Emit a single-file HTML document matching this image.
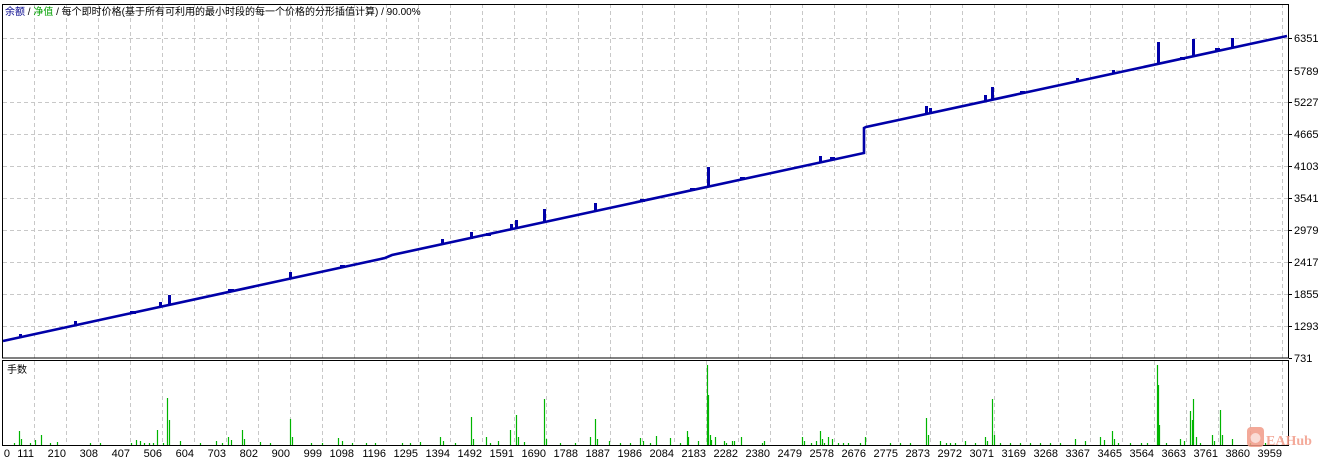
<!DOCTYPE html>
<html><head><meta charset="utf-8"><style>
html,body{margin:0;padding:0;background:#fff;}
svg{display:block;font-family:"Liberation Sans","Noto Sans CJK SC",sans-serif;}
</style></head><body>
<svg width="1318" height="459" viewBox="0 0 1318 459" xmlns="http://www.w3.org/2000/svg">
<rect width="1318" height="459" fill="#fff"/>
<g id="grid" stroke="#c8c8c8" stroke-width="1" stroke-dasharray="4,3">
<path d="M34.5 4V358M66.5 4V358M98.5 4V358M130.5 4V358M162.5 4V358M194.5 4V358M226.5 4V358M258.5 4V358M290.5 4V358M322.5 4V358M354.5 4V358M386.5 4V358M418.5 4V358M450.5 4V358M482.5 4V358M514.5 4V358M546.5 4V358M578.5 4V358M610.5 4V358M642.5 4V358M674.5 4V358M706.5 4V358M738.5 4V358M770.5 4V358M802.5 4V358M834.5 4V358M866.5 4V358M898.5 4V358M930.5 4V358M962.5 4V358M994.5 4V358M1026.5 4V358M1058.5 4V358M1090.5 4V358M1122.5 4V358M1154.5 4V358M1186.5 4V358M1218.5 4V358M1250.5 4V358M1282.5 4V358"/>
<path d="M34.5 361V445M66.5 361V445M98.5 361V445M130.5 361V445M162.5 361V445M194.5 361V445M226.5 361V445M258.5 361V445M290.5 361V445M322.5 361V445M354.5 361V445M386.5 361V445M418.5 361V445M450.5 361V445M482.5 361V445M514.5 361V445M546.5 361V445M578.5 361V445M610.5 361V445M642.5 361V445M674.5 361V445M706.5 361V445M738.5 361V445M770.5 361V445M802.5 361V445M834.5 361V445M866.5 361V445M898.5 361V445M930.5 361V445M962.5 361V445M994.5 361V445M1026.5 361V445M1058.5 361V445M1090.5 361V445M1122.5 361V445M1154.5 361V445M1186.5 361V445M1218.5 361V445M1250.5 361V445M1282.5 361V445"/>
<path d="M3 38.5H1289M3 70.5H1289M3 102.5H1289M3 134.5H1289M3 166.5H1289M3 198.5H1289M3 230.5H1289M3 262.5H1289M3 294.5H1289M3 326.5H1289"/>
</g>
<g fill="none" stroke="#000" stroke-width="1">
<rect x="2.5" y="4.5" width="1286" height="353.5"/>
<rect x="2.5" y="360.5" width="1286" height="85"/>
</g>
<path stroke="#000" d="M1289 38.5h3M1289 70.5h3M1289 102.5h3M1289 134.5h3M1289 166.5h3M1289 198.5h3M1289 230.5h3M1289 262.5h3M1289 294.5h3M1289 326.5h3M1289 358.5h3"/>
<g font-size="11" fill="#000">
<text x="1294" y="42">6351</text><text x="1294" y="75">5789</text><text x="1294" y="106">5227</text><text x="1294" y="138">4665</text><text x="1294" y="170">4103</text><text x="1294" y="202">3541</text><text x="1294" y="234">2979</text><text x="1294" y="266">2417</text><text x="1294" y="298">1855</text><text x="1294" y="330">1293</text><text x="1294" y="362">731</text>
</g>
<g font-size="11" fill="#000" text-anchor="end">
<text x="10" y="457">0</text>
<text x="34" y="457">111</text><text x="66" y="457">210</text><text x="98" y="457">308</text><text x="130" y="457">407</text><text x="162" y="457">506</text><text x="194" y="457">604</text><text x="226" y="457">703</text><text x="258" y="457">802</text><text x="290" y="457">900</text><text x="322" y="457">999</text><text x="354" y="457">1098</text><text x="386" y="457">1196</text><text x="418" y="457">1295</text><text x="450" y="457">1394</text><text x="482" y="457">1492</text><text x="514" y="457">1591</text><text x="546" y="457">1690</text><text x="578" y="457">1788</text><text x="610" y="457">1887</text><text x="642" y="457">1986</text><text x="674" y="457">2084</text><text x="706" y="457">2183</text><text x="738" y="457">2282</text><text x="770" y="457">2380</text><text x="802" y="457">2479</text><text x="834" y="457">2578</text><text x="866" y="457">2676</text><text x="898" y="457">2775</text><text x="930" y="457">2873</text><text x="962" y="457">2972</text><text x="994" y="457">3071</text><text x="1026" y="457">3169</text><text x="1058" y="457">3268</text><text x="1090" y="457">3367</text><text x="1122" y="457">3465</text><text x="1154" y="457">3564</text><text x="1186" y="457">3663</text><text x="1218" y="457">3761</text><text x="1250" y="457">3860</text><text x="1282" y="457">3959</text>
</g>
<text x="5" y="15" font-size="10"><tspan fill="#00008b">余额</tspan><tspan fill="#000"> / </tspan><tspan fill="#00a000">净值</tspan><tspan fill="#000"> / 每个即时价格(基于所有可利用的最小时段的每一个价格的分形插值计算) / 90.00%</tspan></text>
<text x="7" y="373" font-size="10" fill="#000">手数</text>
<path stroke="#00b400" stroke-width="1.2" d="M14.5 445v-2M19.5 445v-14M21.5 445v-6M30.5 445v-2M35.5 445v-5M41.5 445v-10M50.5 445v-2M57.5 445v-3M90.5 445v-2M100.5 445v-2M131.5 445v-2M136.5 445v-5M140.5 445v-4M144.5 445v-2M149.5 445v-2M153.5 445v-2M157.5 445v-15M163.5 445v-2M167.5 445v-47M169.5 445v-25M180.5 445v-4M200.5 445v-2M216.5 445v-4M222.5 445v-2M228.5 445v-8M231.5 445v-5M242.5 445v-15M244.5 445v-6M260.5 445v-3M270.5 445v-2M290.5 445v-26M292.5 445v-8M311.5 445v-2M322.5 445v-2M338.5 445v-7M342.5 445v-4M352.5 445v-2M366.5 445v-2M375.5 445v-2M402.5 445v-2M410.5 445v-2M420.5 445v-3M440.5 445v-8M443.5 445v-4M455.5 445v-2M471.5 445v-28M473.5 445v-6M486.5 445v-8M490.5 445v-2M498.5 445v-4M510.5 445v-15M516.5 445v-30M518.5 445v-8M524.5 445v-3M544.5 445v-46M546.5 445v-6M560.5 445v-2M575.5 445v-2M590.5 445v-8M595.5 445v-26M597.5 445v-6M609.5 445v-4M620.5 445v-2M630.5 445v-2M640.5 445v-7M643.5 445v-4M650.5 445v-2M656.5 445v-9M670.5 445v-7M680.5 445v-2M687.5 445v-14M688.5 445v-8M698.5 445v-4M707.5 445v-80M708.5 445v-50M710.5 445v-10M711.5 445v-5M715.5 445v-8M724.5 445v-4M726.5 445v-2M732.5 445v-4M734.5 445v-4M741.5 445v-8M762.5 445v-2M764.5 445v-4M802.5 445v-8M804.5 445v-4M811.5 445v-2M816.5 445v-4M820.5 445v-14M822.5 445v-6M824.5 445v-2M828.5 445v-8M832.5 445v-6M838.5 445v-2M843.5 445v-2M848.5 445v-2M860.5 445v-2M865.5 445v-8M890.5 445v-2M900.5 445v-2M910.5 445v-2M926.5 445v-27M928.5 445v-10M940.5 445v-4M946.5 445v-2M950.5 445v-2M955.5 445v-2M965.5 445v-4M975.5 445v-2M985.5 445v-8M987.5 445v-4M992.5 445v-46M994.5 445v-10M1000.5 445v-2M1010.5 445v-2M1020.5 445v-2M1030.5 445v-2M1040.5 445v-2M1050.5 445v-2M1060.5 445v-2M1075.5 445v-6M1085.5 445v-4M1100.5 445v-8M1104.5 445v-5M1112.5 445v-14M1114.5 445v-6M1118.5 445v-2M1130.5 445v-2M1141.5 445v-2M1147.5 445v-2M1157.5 445v-80M1158.5 445v-60M1159.5 445v-20M1166.5 445v-2M1180.5 445v-6M1184.5 445v-4M1190.5 445v-34M1192.5 445v-25M1193.5 445v-46M1196.5 445v-8M1200.5 445v-2M1212.5 445v-10M1214.5 445v-4M1220.5 445v-35M1222.5 445v-10M1232.5 445v-6M1250.5 445v-2M1265.5 445v-2"/>
<g stroke="#0000a8" fill="none" stroke-width="2.6">
<path d="M3 341L385 258L392 255L864 153L864 128L866 127L1287 36"/>
</g>
<g fill="#0000a8">
<rect x="19" y="334" width="3" height="4"/><rect x="74" y="321" width="3" height="5"/><rect x="159" y="302" width="3" height="5"/><rect x="168" y="295" width="3" height="10"/><rect x="289" y="272" width="3" height="7"/><rect x="470" y="232" width="3" height="7"/><rect x="515" y="220" width="3" height="9"/><rect x="543" y="209" width="3" height="14"/><rect x="594" y="203" width="3" height="9"/><rect x="707" y="167" width="3" height="20"/><rect x="819" y="156" width="3" height="7"/><rect x="925" y="106" width="3" height="8"/><rect x="929" y="108" width="3" height="6"/><rect x="984" y="95" width="3" height="6"/><rect x="991" y="87" width="3" height="13"/><rect x="1112" y="70" width="3" height="4"/><rect x="1076" y="78" width="3" height="4"/><rect x="1157" y="42" width="3" height="22"/><rect x="1192" y="39" width="3" height="17"/><rect x="1231" y="38" width="3" height="10"/><rect x="441" y="239" width="3" height="4"/><rect x="510" y="224" width="3" height="6"/>
<rect x="130" y="311" width="6" height="3"/><rect x="228" y="289" width="6" height="3"/><rect x="340" y="265" width="5" height="3"/><rect x="486" y="233" width="5" height="3"/><rect x="640" y="199" width="5" height="3"/><rect x="690" y="188" width="5" height="3"/><rect x="740" y="177" width="5" height="3"/><rect x="830" y="157" width="5" height="3"/><rect x="1020" y="91" width="5" height="3"/><rect x="1180" y="57" width="5" height="3"/><rect x="1215" y="48" width="5" height="3"/>
</g>
<g opacity="0.85">
<rect x="1247" y="427" width="17" height="20" rx="4" fill="#f29b88"/>
<circle cx="1255.5" cy="438" r="5" fill="#fff" opacity="0.6"/>
<text x="1266" y="445" font-size="14" font-weight="bold" fill="#f29b88" font-family="Liberation Serif,serif">EAHub</text>
</g>
</svg>
</body></html>
